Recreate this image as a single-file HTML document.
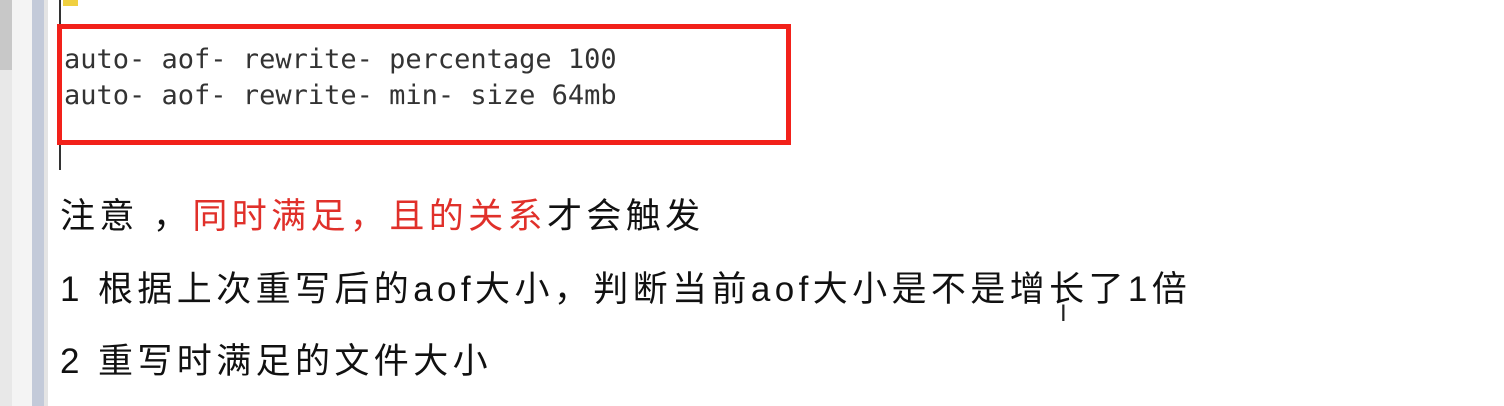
<!DOCTYPE html>
<html><head><meta charset="utf-8"><style>
body{margin:0;width:1504px;height:406px;background:#fff;position:relative;overflow:hidden;font-family:"Liberation Sans","Noto Sans CJK SC",sans-serif}
.a{position:absolute}
.cj{font-size:35px;color:#111;white-space:nowrap;letter-spacing:4.4px;line-height:44px}
.r{color:#e0302a}
.mono{font-family:"DejaVu Sans Mono","Liberation Mono",monospace;font-size:27px;color:#333;white-space:nowrap;line-height:36px}
</style></head><body>
<div class="a" style="left:0;top:0;width:12px;height:406px;background:#e8e8e8"></div>
<div class="a" style="left:0;top:0;width:12px;height:70px;background:#c8c8c8"></div>
<div class="a" style="left:12px;top:0;width:20px;height:406px;background:#f4f4f4"></div>
<div class="a" style="left:32px;top:0;width:12px;height:406px;background:#c3cad9"></div>
<div class="a" style="left:44px;top:0;width:4px;height:406px;background:#e4e4e4"></div>
<div class="a" style="left:59px;top:0;width:2px;height:170px;background:#333"></div>
<div class="a" style="left:63px;top:0;width:15px;height:6px;background:#f0d040"></div>
<div class="a" style="left:57px;top:24px;width:724px;height:111px;border:5px solid #f2211a"></div>
<div class="a mono" style="left:64px;top:42px">auto- aof- rewrite- percentage 100<br>auto- aof- rewrite- min- size 64mb</div>
<div class="a cj" style="left:60px;top:195px">注意 ，<span class="r">同时满足，且的关系</span>才会触发</div>
<div class="a cj" style="left:60px;top:268px">1 根据上次重写后的aof大小，判断当前aof大小是不是增长了1倍</div>
<div class="a cj" style="left:60px;top:340px">2 重写时满足的文件大小</div>
<div class="a" style="left:1060px;top:300px;font-size:24px;color:#222">I</div>
</body></html>
